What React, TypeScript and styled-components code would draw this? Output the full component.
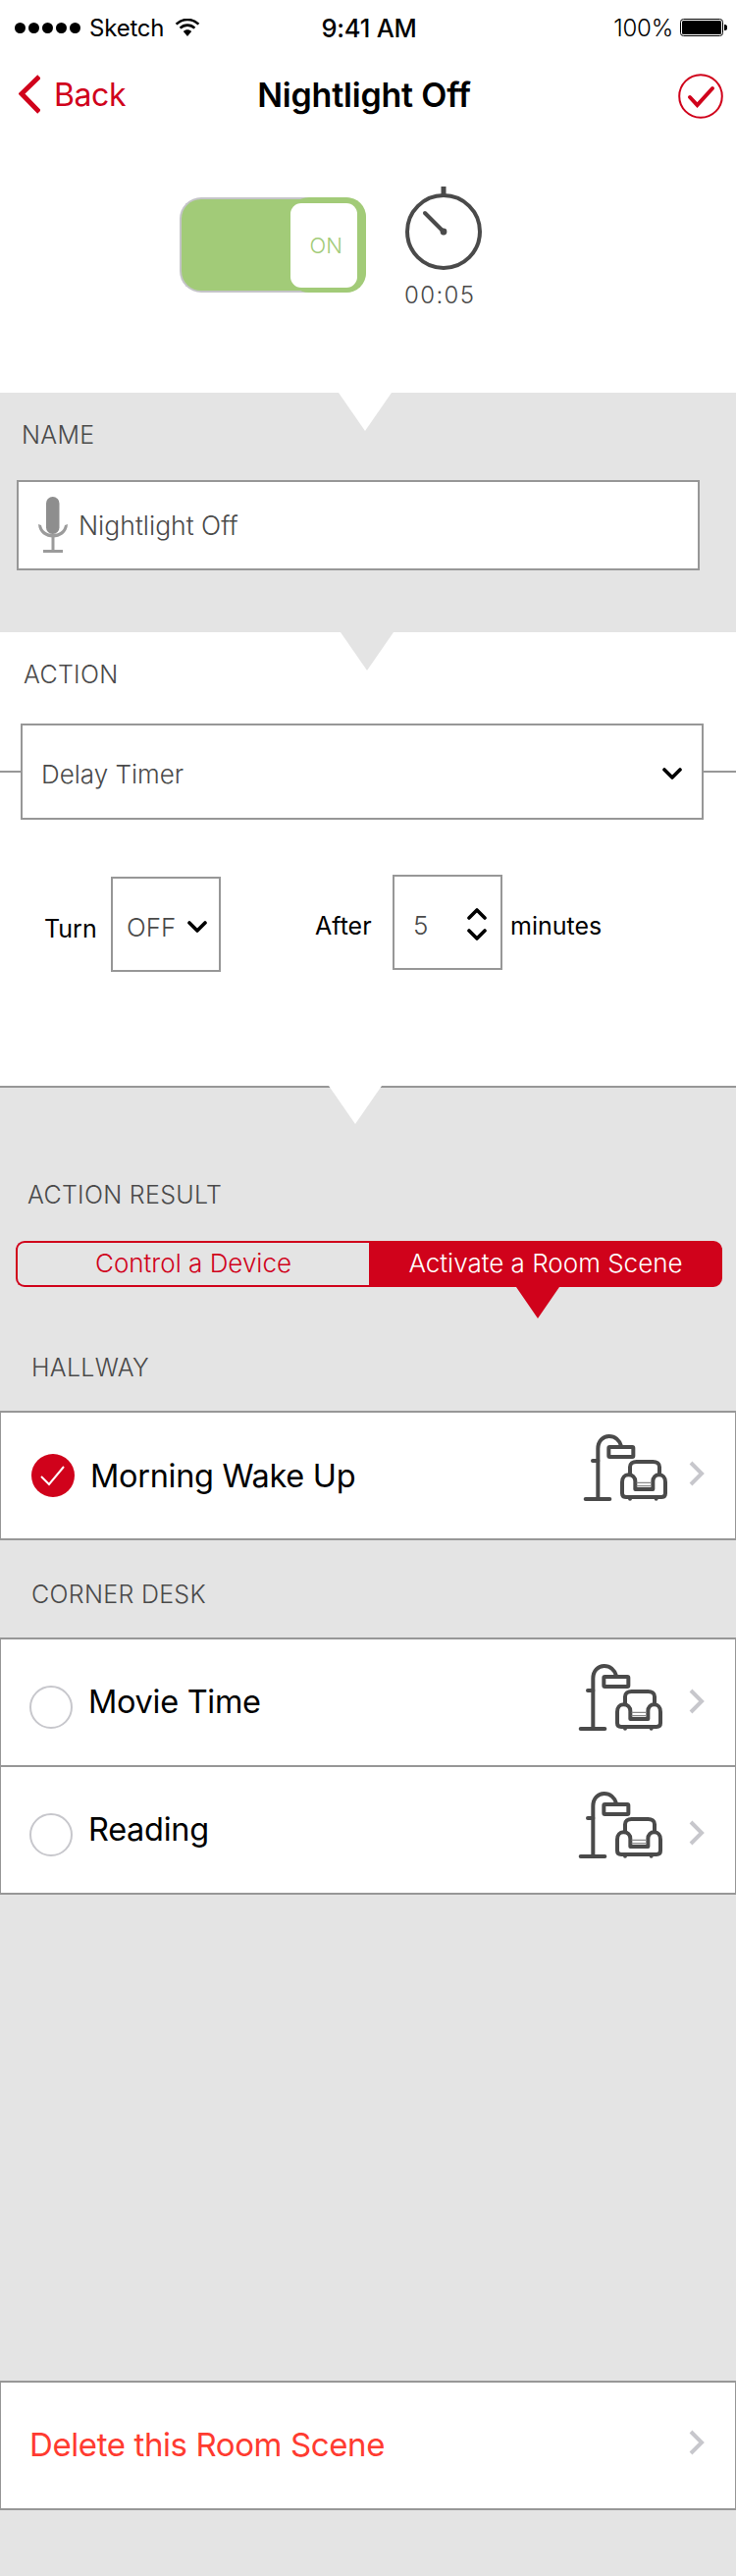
import React from "react";
import styled, { createGlobalStyle } from "styled-components";

const RED = "#d0021b";
const GREY = "#e4e4e4";
const LINE = "#979797";
const INK = "#4a4a4a";

const Global = createGlobalStyle`
  html, body { margin: 0; padding: 0; background: #fff; }
  * { box-sizing: border-box; }
  body { font-family: Inter, "Liberation Sans", sans-serif; }
`;

const Page = styled.div`
  width: 750px;
  height: 2624px;
  display: flex;
  flex-direction: column;
  overflow: hidden;
`;

const StatusBar = styled.div`
  height: 56px;
  display: grid;
  grid-template-columns: 1fr auto 1fr;
  align-items: center;
  color: #000;
  font-size: 24px;
  letter-spacing: -0.2px;
`;
const StatusLeft = styled.div`
  display: flex;
  align-items: center;
  padding-left: 15px;
`;
const Dots = styled.div`
  display: flex;
  gap: 3px;
  margin-right: 9px;
`;
const Dot = styled.span`
  width: 11px;
  height: 11px;
  border-radius: 50%;
  background: #000;
`;
const WifiIcon = styled.svg`
  width: 26px;
  height: 18px;
  margin-left: 11px;
`;
const Time = styled.div`
  font-weight: 500;
  font-size: 25.5px;
  padding-left: 2px;
`;
const StatusRight = styled.div`
  display: flex;
  align-items: center;
  justify-content: flex-end;
  padding-right: 9px;
  font-weight: 300;
`;
const Battery = styled.svg`
  width: 48px;
  height: 18px;
  margin-left: 7px;
`;

const Nav = styled.div`
  height: 80px;
  display: grid;
  grid-template-columns: 1fr auto 1fr;
  align-items: center;
  padding: 0 13px 0 19px;
`;
const BackLink = styled.div`
  display: flex;
  align-items: center;
  gap: 14px;
  color: ${RED};
  font-size: 32px;
  font-weight: 400;
  letter-spacing: -0.4px;
`;
const BackIcon = styled.svg`
  width: 22px;
  height: 40px;
`;
const Title = styled.div`
  font-size: 34px;
  font-weight: 600;
  color: #000;
  letter-spacing: -0.2px;
  margin-right: 14px;
`;
const DoneIcon = styled.svg`
  width: 46px;
  height: 46px;
  justify-self: end;
  margin-top: 4px;
`;

const Controls = styled.div`
  height: 264px;
  display: flex;
  align-items: flex-start;
  padding: 54px 0 0 183px;
  gap: 40px;
`;
const Toggle = styled.div`
  position: relative;
  width: 190px;
  height: 97px;
  margin-top: 11px;
  border-radius: 22px;
  background: #a2cb78;
  border: 2px solid #c4c4c8;
  border-right: 0;
`;
const ToggleEnd = styled.div`
  position: absolute;
  top: -2px;
  right: 0;
  bottom: -2px;
  width: 78px;
  padding: 6px 9px 5px 0;
  display: flex;
  background: #a2cb78;
  border-radius: 20px;
`;
const Knob = styled.div`
  flex: 1;
  margin-left: 1px;
  background: #fff;
  border-radius: 11px;
  color: #a2cb78;
  font-size: 22px;
  font-weight: 300;
  display: flex;
  align-items: center;
  justify-content: flex-end;
  padding: 0 15px 1px 0;
`;
const TimerBlock = styled.div`
  width: 78px;
  display: flex;
  flex-direction: column;
  align-items: flex-start;
`;
const TimerIcon = styled.svg`
  width: 78px;
  height: 88px;
`;
const TimerText = styled.div`
  font-size: 24px;
  line-height: 30px;
  font-weight: 300;
  color: ${INK};
  letter-spacing: 1.4px;
  margin: 8px 0 0 -1px;
  white-space: nowrap;
`;

const Notch = styled.div<{ $x: number; $color: string; $top?: number }>`
  position: absolute;
  top: ${(p) => p.$top ?? 0}px;
  left: ${(p) => p.$x}px;
  width: 0;
  height: 0;
  border-left: 27px solid transparent;
  border-right: 27px solid transparent;
  border-top: 39px solid ${(p) => p.$color};
`;

const NameSection = styled.section`
  position: relative;
  height: 244px;
  background: ${GREY};
  padding-top: 29px;
`;
const ActionSection = styled.section`
  position: relative;
  height: 462px;
  background: #fff;
  padding-top: 29px;
`;
const ResultSection = styled.section`
  position: relative;
  flex: 1;
  display: flex;
  flex-direction: column;
  background: ${GREY};
  border-top: 2px solid ${LINE};
  padding: 95px 0 67px;
`;

const SectionLabel = styled.div<{ $x: number }>`
  font-size: 25px;
  line-height: 28px;
  font-weight: 300;
  color: ${INK};
  padding-left: ${(p) => p.$x}px;
  letter-spacing: 0.3px;
`;

const NameField = styled.div`
  width: 696px;
  height: 92px;
  margin: 32px 0 0 17px;
  background: #fff;
  border: 2px solid ${LINE};
  display: flex;
  align-items: center;
  padding-left: 18px;
  gap: 9px;
  color: ${INK};
  font-size: 26.5px;
  font-weight: 300;
`;
const MicIcon = styled.svg`
  width: 34px;
  height: 58px;
`;

const SelectWrap = styled.div`
  position: relative;
  margin-top: 36px;
  padding-left: 21px;
  &::before {
    content: "";
    position: absolute;
    left: 0;
    right: 0;
    top: 48px;
    height: 2px;
    background: ${LINE};
  }
`;
const SelectBox = styled.div`
  position: relative;
  width: 696px;
  height: 98px;
  background: #fff;
  border: 2px solid ${LINE};
  display: flex;
  align-items: center;
  justify-content: space-between;
  padding: 5px 20px 0 19px;
  color: ${INK};
  font-size: 26px;
  font-weight: 300;
`;
const Chevron = styled.svg`
  width: 20px;
  height: 13px;
  flex: none;
`;

const TimerRow = styled.div`
  display: flex;
  align-items: flex-start;
  margin-top: 56px;
  padding-left: 45px;
  color: #000;
  font-size: 25px;
  font-weight: 400;
`;
const TurnGroup = styled.div`
  display: flex;
  align-items: center;
  margin-top: 2px;
`;
const AfterGroup = styled.div`
  display: flex;
  align-items: center;
  margin-left: 96px;
`;
const RowLabel = styled.span<{ $w: number; $down: number }>`
  width: ${(p) => p.$w}px;
  padding-top: ${(p) => p.$down}px;
`;
const MinutesLabel = styled.span`
  margin-left: 8px;
  padding-top: 7px;
`;
const SmallBox = styled.div`
  width: 112px;
  height: 97px;
  border: 2px solid ${LINE};
  display: flex;
  align-items: center;
  color: ${INK};
  font-weight: 300;
  font-size: 26px;
  padding: 6px 0 0 14px;
`;
const SmallValue = styled.span<{ $w: number; $indent?: number }>`
  width: ${(p) => p.$w}px;
  padding-left: ${(p) => p.$indent ?? 0}px;
`;
const Stepper = styled.div`
  display: flex;
  flex-direction: column;
  gap: 9px;
  margin-top: -3px;
`;

const Segments = styled.div`
  position: relative;
  display: grid;
  grid-template-columns: 360px 360px;
  width: 720px;
  height: 47px;
  margin: 33px 0 0 16px;
  font-size: 26px;
  font-weight: 300;
`;
const Segment = styled.div<{ $active?: boolean }>`
  display: flex;
  align-items: center;
  justify-content: center;
  color: ${(p) => (p.$active ? "#fff" : RED)};
  background: ${(p) => (p.$active ? RED : "transparent")};
  border: 2px solid ${RED};
  border-radius: ${(p) => (p.$active ? "0 9px 9px 0" : "9px 0 0 9px")};
  border-right-width: ${(p) => (p.$active ? 2 : 0)}px;
  padding-bottom: 2px;
`;
const SegmentPointer = styled.div`
  position: absolute;
  left: 510px;
  top: 47px;
  width: 0;
  height: 0;
  border-left: 22px solid transparent;
  border-right: 22px solid transparent;
  border-top: 32px solid ${RED};
`;

const GroupLabel = styled(SectionLabel)<{ $gap: number }>`
  margin-top: ${(p) => p.$gap}px;
`;
const List = styled.div`
  margin-top: 30px;
  background: #fff;
  border: 1px solid ${LINE};
  border-top: 0;
  border-bottom: 2px solid ${LINE};
`;
const Row = styled.div<{ $pad: number }>`
  position: relative;
  height: 130px;
  border-top: 2px solid ${LINE};
  display: flex;
  align-items: center;
  padding-left: ${(p) => p.$pad}px;
  color: #000;
  font-size: 32.5px;
  letter-spacing: -0.3px;
  font-weight: 400;
`;
const RadioOn = styled.svg`
  width: 44px;
  height: 44px;
  flex: none;
  margin-right: 16px;
`;
const RadioOff = styled.div`
  width: 44px;
  height: 44px;
  flex: none;
  border-radius: 50%;
  border: 2px solid #c7c7cc;
  margin: 10px 16px 0 0;
`;
const RowText = styled.span<{ $up: number }>`
  flex: 1;
  padding-bottom: ${(p) => p.$up}px;
`;
const SceneIcon = styled.svg<{ $right: number; $up: number }>`
  width: 90px;
  height: 72px;
  flex: none;
  margin-right: ${(p) => p.$right}px;
  margin-bottom: ${(p) => p.$up}px;
`;
const Disclosure = styled.svg<{ $up: number }>`
  position: absolute;
  right: 31px;
  top: 50%;
  width: 16px;
  height: 26px;
  margin-top: ${(p) => -13 - p.$up}px;
`;
const DeleteList = styled(List)`
  margin-top: auto;
`;
const DeleteText = styled.span`
  color: #ff3b30;
  font-size: 33px;
  letter-spacing: -0.4px;
  padding-bottom: 2px;
  margin-left: -1px;
`;

const Chev = ({ up }: { up?: boolean }) => (
  <Chevron viewBox="0 0 20 13">
    <path
      d={up ? "M2 11 L10 3 L18 11" : "M2 2 L10 10 L18 2"}
      fill="none"
      stroke="#000"
      strokeWidth="3.6"
      strokeLinecap="round"
      strokeLinejoin="round"
    />
  </Chevron>
);

const Scene = ({ right, up }: { right: number; up: number }) => (
  <SceneIcon $right={right} $up={up} viewBox="70 55 270 216">
    <g fill="none" stroke="#4a4a4a" strokeWidth="12" strokeLinecap="round" strokeLinejoin="round">
      <path d="M84 262 H158" />
      <path d="M122 262 V108 C122 84 138 70 156 70 C174 70 188 82 193 100" />
      <path d="M106 145 H122" />
      <rect x="155" y="103" width="75" height="30" rx="3" />
      <path d="M220 186 V164 C220 154 228 148 240 148 H290 C302 148 310 154 310 164 V186" />
      <path d="M196 210 C196 196 204 188 215 188 C228 188 236 196 236 208 V232 H290 V208 C290 196 298 188 309 188 C320 188 328 196 328 210 V245 C328 252 323 256 316 256 H208 C201 256 196 252 196 245 Z" />
      <path d="M220 258 V261 M300 258 V261" />
    </g>
    <path d="M240 212 H286 M240 222 H286" stroke="#8a8a8a" strokeWidth="4" />
  </SceneIcon>
);

const Arrow = ({ up }: { up: number }) => (
  <Disclosure $up={up} viewBox="0 0 16 26">
    <path d="M2 2 L13 13 L2 24" fill="none" stroke="#c7c7cc" strokeWidth="4" />
  </Disclosure>
);

export default function App() {
  return (
    <Page>
      <Global />
      <StatusBar>
        <StatusLeft>
          <Dots>
            {[0, 1, 2, 3, 4].map((i) => (
              <Dot key={i} />
            ))}
          </Dots>
          <span>Sketch</span>
          <WifiIcon viewBox="0 0 26 18">
            <path d="M13 18 L8.8 13 C11.2 10.8 14.8 10.8 17.2 13 Z" fill="#000" />
            <path d="M5.6 9.6 C9.8 5.6 16.2 5.6 20.4 9.6" fill="none" stroke="#000" strokeWidth="2.6" />
            <path d="M1.6 5.6 C8.2 -0.6 17.8 -0.6 24.4 5.6" fill="none" stroke="#000" strokeWidth="2.6" />
          </WifiIcon>
        </StatusLeft>
        <Time>9:41 AM</Time>
        <StatusRight>
          <span>100%</span>
          <Battery viewBox="0 0 48 18">
            <rect x="0.5" y="0.5" width="43" height="17" rx="3" fill="none" stroke="#000" />
            <rect x="2" y="2" width="40" height="14" rx="1.5" fill="#000" />
            <path d="M45 6 H46 C47 6 48 7 48 8 V10 C48 11 47 12 46 12 H45 Z" fill="#000" />
          </Battery>
        </StatusRight>
      </StatusBar>

      <Nav>
        <BackLink>
          <BackIcon viewBox="0 0 22 40">
            <path d="M21 2 L3 19.5 L21 38" fill="none" stroke={RED} strokeWidth="5" />
          </BackIcon>
          <span>Back</span>
        </BackLink>
        <Title>Nightlight Off</Title>
        <DoneIcon viewBox="0 0 46 46">
          <circle cx="23" cy="23" r="21.8" fill="none" stroke={RED} strokeWidth="2" />
          <path d="M12 24 L19.5 32 L35 15" fill="none" stroke={RED} strokeWidth="4" strokeLinecap="round" />
        </DoneIcon>
      </Nav>

      <Controls>
        <Toggle>
          <ToggleEnd>
            <Knob>ON</Knob>
          </ToggleEnd>
        </Toggle>
        <TimerBlock>
          <TimerIcon viewBox="0 0 78 88">
            <circle cx="39" cy="46" r="37" fill="none" stroke={INK} strokeWidth="4" />
            <rect x="36.5" y="0" width="5" height="9" fill={INK} />
            <path d="M20 27 L39 46" stroke={INK} strokeWidth="4" strokeLinecap="round" />
            <circle cx="39" cy="46" r="3.4" fill={INK} />
          </TimerIcon>
          <TimerText>00:05</TimerText>
        </TimerBlock>
      </Controls>

      <NameSection>
        <Notch $x={345} $color="#fff" />
        <SectionLabel $x={22}>NAME</SectionLabel>
        <NameField>
          <MicIcon viewBox="0 0 34 58">
            <rect x="10" y="0" width="13.5" height="38" rx="6.7" fill="#8e8e8e" />
            <path d="M2 28 C3 46 31 46 32 28 L29 29 C27 41 7 41 5 29 Z" fill="#9b9b9b" />
            <rect x="15.5" y="40" width="3" height="15" fill="#9b9b9b" />
            <rect x="7" y="54" width="20" height="3" fill="#9b9b9b" />
          </MicIcon>
          <span>Nightlight Off</span>
        </NameField>
      </NameSection>

      <ActionSection>
        <Notch $x={347} $color={GREY} />
        <SectionLabel $x={24}>ACTION</SectionLabel>
        <SelectWrap>
          <SelectBox>
            <span>Delay Timer</span>
            <Chev />
          </SelectBox>
        </SelectWrap>
        <TimerRow>
          <TurnGroup>
            <RowLabel $w={68} $down={9}>Turn</RowLabel>
            <SmallBox>
              <SmallValue $w={62}>OFF</SmallValue>
              <Chev />
            </SmallBox>
          </TurnGroup>
          <AfterGroup>
            <RowLabel $w={79} $down={7}>After</RowLabel>
            <SmallBox>
              <SmallValue $w={60} $indent={5}>5</SmallValue>
              <Stepper>
                <Chev up />
                <Chev />
              </Stepper>
            </SmallBox>
            <MinutesLabel>minutes</MinutesLabel>
          </AfterGroup>
        </TimerRow>
      </ActionSection>

      <ResultSection>
        <Notch $x={335} $color="#fff" $top={-2} />
        <SectionLabel $x={28}>ACTION RESULT</SectionLabel>
        <Segments>
          <Segment>Control a Device</Segment>
          <Segment $active>Activate a Room Scene</Segment>
          <SegmentPointer />
        </Segments>

        <GroupLabel $x={32} $gap={68}>HALLWAY</GroupLabel>
        <List>
          <Row $pad={31}>
            <RadioOn viewBox="0 0 44 44">
              <circle cx="22" cy="22" r="22" fill={RED} />
              <path d="M10 23 L18 31 L33 13" fill="none" stroke="#fff" strokeWidth="2" />
            </RadioOn>
            <RowText $up={0}>Morning Wake Up</RowText>
            <Scene right={67} up={18} />
            <Arrow up={2} />
          </Row>
        </List>

        <GroupLabel $x={32} $gap={41}>CORNER DESK</GroupLabel>
        <List>
          <Row $pad={29}>
            <RadioOff />
            <RowText $up={1}>Movie Time</RowText>
            <Scene right={72} up={12} />
            <Arrow up={1} />
          </Row>
          <Row $pad={29}>
            <RadioOff />
            <RowText $up={1}>Reading</RowText>
            <Scene right={72} up={12} />
            <Arrow up={-3} />
          </Row>
        </List>

        <DeleteList>
          <Row $pad={30}>
            <DeleteText>Delete this Room Scene</DeleteText>
            <Arrow up={3} />
          </Row>
        </DeleteList>
      </ResultSection>
    </Page>
  );
}
